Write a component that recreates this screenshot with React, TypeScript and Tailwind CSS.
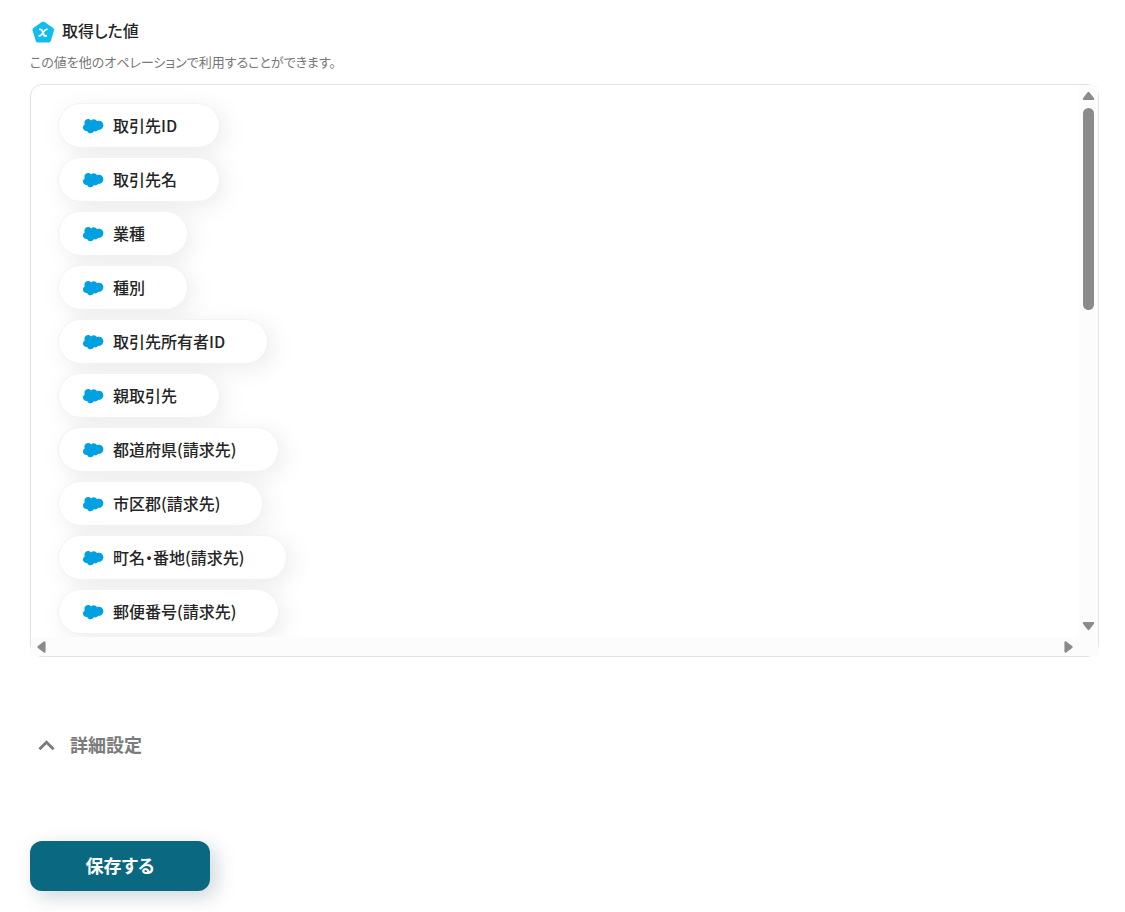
import { useState } from "react";

const values = [
  "取引先ID",
  "取引先名",
  "業種",
  "種別",
  "取引先所有者ID",
  "親取引先",
  "都道府県(請求先)",
  "市区郡(請求先)",
  "町名・番地(請求先)",
  "郵便番号(請求先)",
];

function VariableIcon() {
  return (
    <svg viewBox="0 0 24 24" className="size-6 shrink-0" aria-hidden="true">
      <path
        d="M10.8 1.9 Q12.2 .9 13.6 1.9 L22.2 8 Q23.5 9 23 10.5 L19.8 20.9 Q19.3 22.4 17.8 22.4 L6.8 22.4 Q5.3 22.4 4.8 20.9 L1.5 10.5 Q1 9 2.3 8 Z"
        fill="#12bdee"
      />
      <path
        d="M8.8 9.4 C10.2 9.2 10.8 9.6 11.3 11 L12.6 14.4 C13.1 15.8 13.8 16.2 15.2 15.9 M15.8 9.4 C14.6 9.2 13.9 10 12.8 11.6 L11.4 13.5 C10.3 15.2 9.6 16.1 8.3 15.9"
        fill="none"
        stroke="#fff"
        strokeWidth="1.8"
        strokeLinecap="round"
      />
    </svg>
  );
}

function CloudIcon() {
  return (
    <svg viewBox="0 0 22 16" className="h-4 w-[22px] shrink-0" aria-hidden="true">
      <path
        d="M9.1 2.5 C9.8 1.8 10.7 1.3 11.8 1.3 C13.2 1.3 14.4 2.1 15 3.2 C15.6 2.9 16.2 2.8 16.9 2.8 C19.4 2.8 21.4 4.8 21.4 7.3 C21.4 9.9 19.4 11.9 16.9 11.9 C16.6 11.9 16.3 11.9 16 11.8 C15.5 12.8 14.5 13.4 13.3 13.4 C12.8 13.4 12.3 13.3 11.9 13.1 C11.4 14.4 10.1 15.3 8.6 15.3 C7.1 15.3 5.7 14.3 5.2 12.9 C5 13 4.7 13 4.5 13 C2.6 13 1 11.4 1 9.4 C1 8.1 1.7 7 2.8 6.4 C2.5 5.9 2.4 5.3 2.4 4.8 C2.4 2.6 4.2 .9 6.3 .9 C7.4 .9 8.5 1.6 9.1 2.5 Z"
        fill="#00a1e0"
      />
    </svg>
  );
}

function Arrow({ className }: { className: string }) {
  return (
    <svg viewBox="0 0 14 10" className={className} aria-hidden="true">
      <path
        d="M7 1.8 L12 8.2 H2 Z"
        fill="#8b8b8b"
        stroke="#8b8b8b"
        strokeWidth="2.4"
        strokeLinejoin="round"
      />
    </svg>
  );
}

export default function App() {
  const [open, setOpen] = useState(true);

  return (
    <main
      lang="ja"
      className="bg-white pt-5 pr-[26px] pb-5 pl-[30px] font-['Noto_Sans_CJK_JP',sans-serif] text-[#252525] [font-feature-settings:'palt']"
    >
      <h2 className="flex h-6 items-center gap-[7px] pl-px text-base leading-6 font-medium">
        <VariableIcon />
        <span className="pb-1">取得した値</span>
      </h2>
      <p className="mt-2 text-[13px] leading-5 text-[#777]">
        この値を他のオペレーションで利用することができます。
      </p>

      <section
        aria-label="取得した値"
        className="mt-3 grid h-[573px] grid-cols-[minmax(0,1fr)_19px] grid-rows-[minmax(0,1fr)_19px] rounded-xl border border-[#e2e2e2]"
      >
        <ul className="flex flex-col items-start gap-[9px] overflow-auto rounded-tl-xl px-[27px] py-[18px] [scrollbar-width:none]">
          {values.map((value) => (
            <li
              key={value}
              className="flex h-[45px] shrink-0 items-center gap-[9px] rounded-full border border-[#f3f3f3] bg-white pr-[42px] pl-[23px] text-base font-medium shadow-[5px_5px_25px_rgba(0,0,0,0.08)]"
            >
              <CloudIcon />
              <span className="pb-0.5">{value}</span>
            </li>
          ))}
        </ul>
        <div className="flex flex-col items-center bg-[#fcfcfc] py-1.5" aria-hidden="true">
          <Arrow className="h-2.5 w-[13px]" />
          <div className="mt-[7px] h-[202px] w-[11px] rounded-full bg-[#8b8b8b]" />
          <Arrow className="mt-auto h-2.5 w-[13px] rotate-180" />
        </div>
        <div className="flex items-center justify-between bg-[#fcfcfc] px-1" aria-hidden="true">
          <Arrow className="h-2.5 w-[13px] -rotate-90" />
          <Arrow className="h-2.5 w-[13px] rotate-90" />
        </div>
        <div className="bg-[#fcfcfc]" />
      </section>

      <button
        type="button"
        aria-expanded={open}
        onClick={() => setOpen(!open)}
        className="mt-[74px] flex h-7 items-center gap-[15px] pl-2 text-lg font-bold text-[#7b7b7b]"
      >
        <svg
          viewBox="0 0 17 16"
          className={open ? "h-4 w-[17px]" : "h-4 w-[17px] rotate-180"}
          fill="none"
          stroke="currentColor"
          strokeWidth="2.8"
          aria-hidden="true"
        >
          <path d="M1.4 12.3 L8.5 5.2 L15.6 12.3" />
        </svg>
        <span className="pb-0.5">詳細設定</span>
      </button>

      <button
        type="button"
        className="mt-[82px] h-[50px] w-[180px] rounded-xl bg-[#0a6881] pb-[3px] text-lg font-bold text-white shadow-[6px_6px_20px_rgba(10,50,70,0.2)]"
      >
        保存する
      </button>
    </main>
  );
}
